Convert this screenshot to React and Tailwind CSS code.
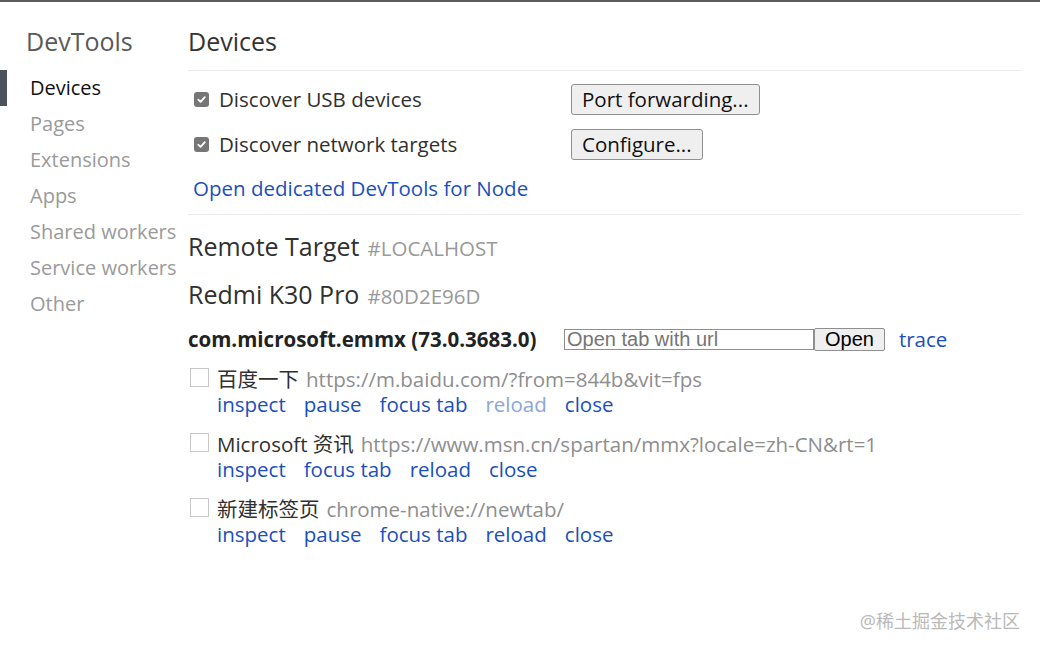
import React from "react";

const navItems = ["Devices", "Pages", "Extensions", "Apps", "Shared workers", "Service workers", "Other"];

const pages = [
  {
    title: "百度一下",
    url: "https://m.baidu.com/?from=844b&vit=fps",
    actions: [["inspect"], ["pause"], ["focus tab"], ["reload", true], ["close"]],
  },
  {
    title: "Microsoft 资讯",
    url: "https://www.msn.cn/spartan/mmx?locale=zh-CN&rt=1",
    actions: [["inspect"], ["focus tab"], ["reload"], ["close"]],
  },
  {
    title: "新建标签页",
    url: "chrome-native://newtab/",
    actions: [["inspect"], ["pause"], ["focus tab"], ["reload"], ["close"]],
  },
];

const CheckedBox = () => (
  <span className="w-[15px] h-[15px] rounded-[3px] bg-[#767676] flex items-center justify-center shrink-0">
    <svg width="11" height="11" viewBox="0 0 12 12">
      <path d="M2.5 6.2 L5 8.6 L9.6 3.4" fill="none" stroke="white" strokeWidth="2" strokeLinecap="round" strokeLinejoin="round" />
    </svg>
  </span>
);

const Button = ({ children }) => (
  <button className="h-[31px] px-[10px] bg-[#efefef] border border-[#8f8f8f] rounded-[3px] text-[#111] leading-none">
    {children}
  </button>
);

const App = () => {
  return (
    <div className="relative w-[1040px] h-[653px] bg-white border-t-2 border-[#5c5c5c] overflow-hidden font-['Open_Sans','Noto_Sans_CJK_SC',sans-serif] text-[20.5px] text-[#303030]">
      <div className="flex">
        {/* Sidebar */}
        <div className="w-[188px] shrink-0 pt-[23px]">
          <div className="pl-[26px] h-[32px] leading-[32px] text-[25px] text-[#5a5a5a]">DevTools</div>
          <ul className="mt-[13px] text-[20px]">
            {navItems.map((item, i) => (
              <li key={item} className="flex h-[36px] items-center leading-[36px]">
                <span className={`w-[7px] h-[36px] ${i === 0 ? "bg-[#4d535a]" : ""}`} />
                <span className={`pl-[23px] ${i === 0 ? "text-[#111]" : "text-[#9a9a9a]"}`}>{item}</span>
              </li>
            ))}
          </ul>
        </div>

        {/* Main */}
        <div className="flex-1 pr-[18px] pt-[23px]">
          <div className="h-[32px] leading-[32px] text-[25px] text-[#333]">Devices</div>
          <div className="mt-[13px] border-b border-[#ececec]" />

          <div className="pt-[6px] pb-[5px] border-b border-[#ececec]">
            <div className="grid grid-cols-[383px_1fr]">
              <div className="h-[45px] flex items-center gap-[10px] pl-[6px]">
                <CheckedBox />
                <span>Discover USB devices</span>
              </div>
              <div className="h-[45px] flex items-center">
                <Button>Port forwarding...</Button>
              </div>
              <div className="h-[45px] flex items-center gap-[10px] pl-[6px]">
                <CheckedBox />
                <span>Discover network targets</span>
              </div>
              <div className="h-[45px] flex items-center">
                <Button>Configure...</Button>
              </div>
            </div>
            <div className="h-[42px] flex items-center pl-[5px] text-[#1a4fbd]">Open dedicated DevTools for Node</div>
          </div>

          <div className="mt-[13px] h-[34px] flex items-baseline gap-[8px]">
            <span className="text-[25px]">Remote Target</span>
            <span className="text-[#999]">#LOCALHOST</span>
          </div>
          <div className="mt-[14px] h-[34px] flex items-baseline gap-[8px]">
            <span className="text-[25px]">Redmi K30 Pro</span>
            <span className="text-[#999]">#80D2E96D</span>
          </div>

          <div className="mt-[12px] h-[34px] flex items-center">
            <span className="font-bold text-[#222] w-[376px]">com.microsoft.emmx (73.0.3683.0)</span>
            <input
              type="text"
              placeholder="Open tab with url"
              className="w-[250px] h-[21px] border border-[#8f8f8f] px-[2px] font-['Liberation_Sans',sans-serif] text-[20px] placeholder:text-[#757575] outline-none"
            />
            <button className="h-[23px] px-[10px] bg-[#efefef] border border-[#8f8f8f] rounded-[2px] font-['Liberation_Sans',sans-serif] text-[20px] leading-none text-black">
              Open
            </button>
            <span className="ml-[14px] text-[#1a4fbd]">trace</span>
          </div>

          <div className="mt-[11px] flex flex-col gap-[15px]">
            {pages.map((p) => (
              <div key={p.title} className="flex">
                <span className="ml-[2px] mt-[1px] w-[19px] h-[19px] border border-[#c8c8c8] bg-white shrink-0" />
                <div className="ml-[8px]">
                  <div className="h-[25px] leading-[25px] flex items-center gap-[7px]">
                    <span className="text-[#303030]">{p.title}</span>
                    <span className="text-[#8e8e8e]">{p.url}</span>
                  </div>
                  <div className="h-[25px] leading-[25px] flex items-center gap-[18px]">
                    {p.actions.map(([a, disabled]) => (
                      <span key={a} className={disabled ? "text-[#8ba6d9]" : "text-[#1a4fbd]"}>
                        {a}
                      </span>
                    ))}
                  </div>
                </div>
              </div>
            ))}
          </div>
        </div>
      </div>

      <div className="absolute right-[20px] bottom-[18px] text-[18px] text-[#b9b9b9]">@稀土掘金技术社区</div>
    </div>
  );
};

export default App;
